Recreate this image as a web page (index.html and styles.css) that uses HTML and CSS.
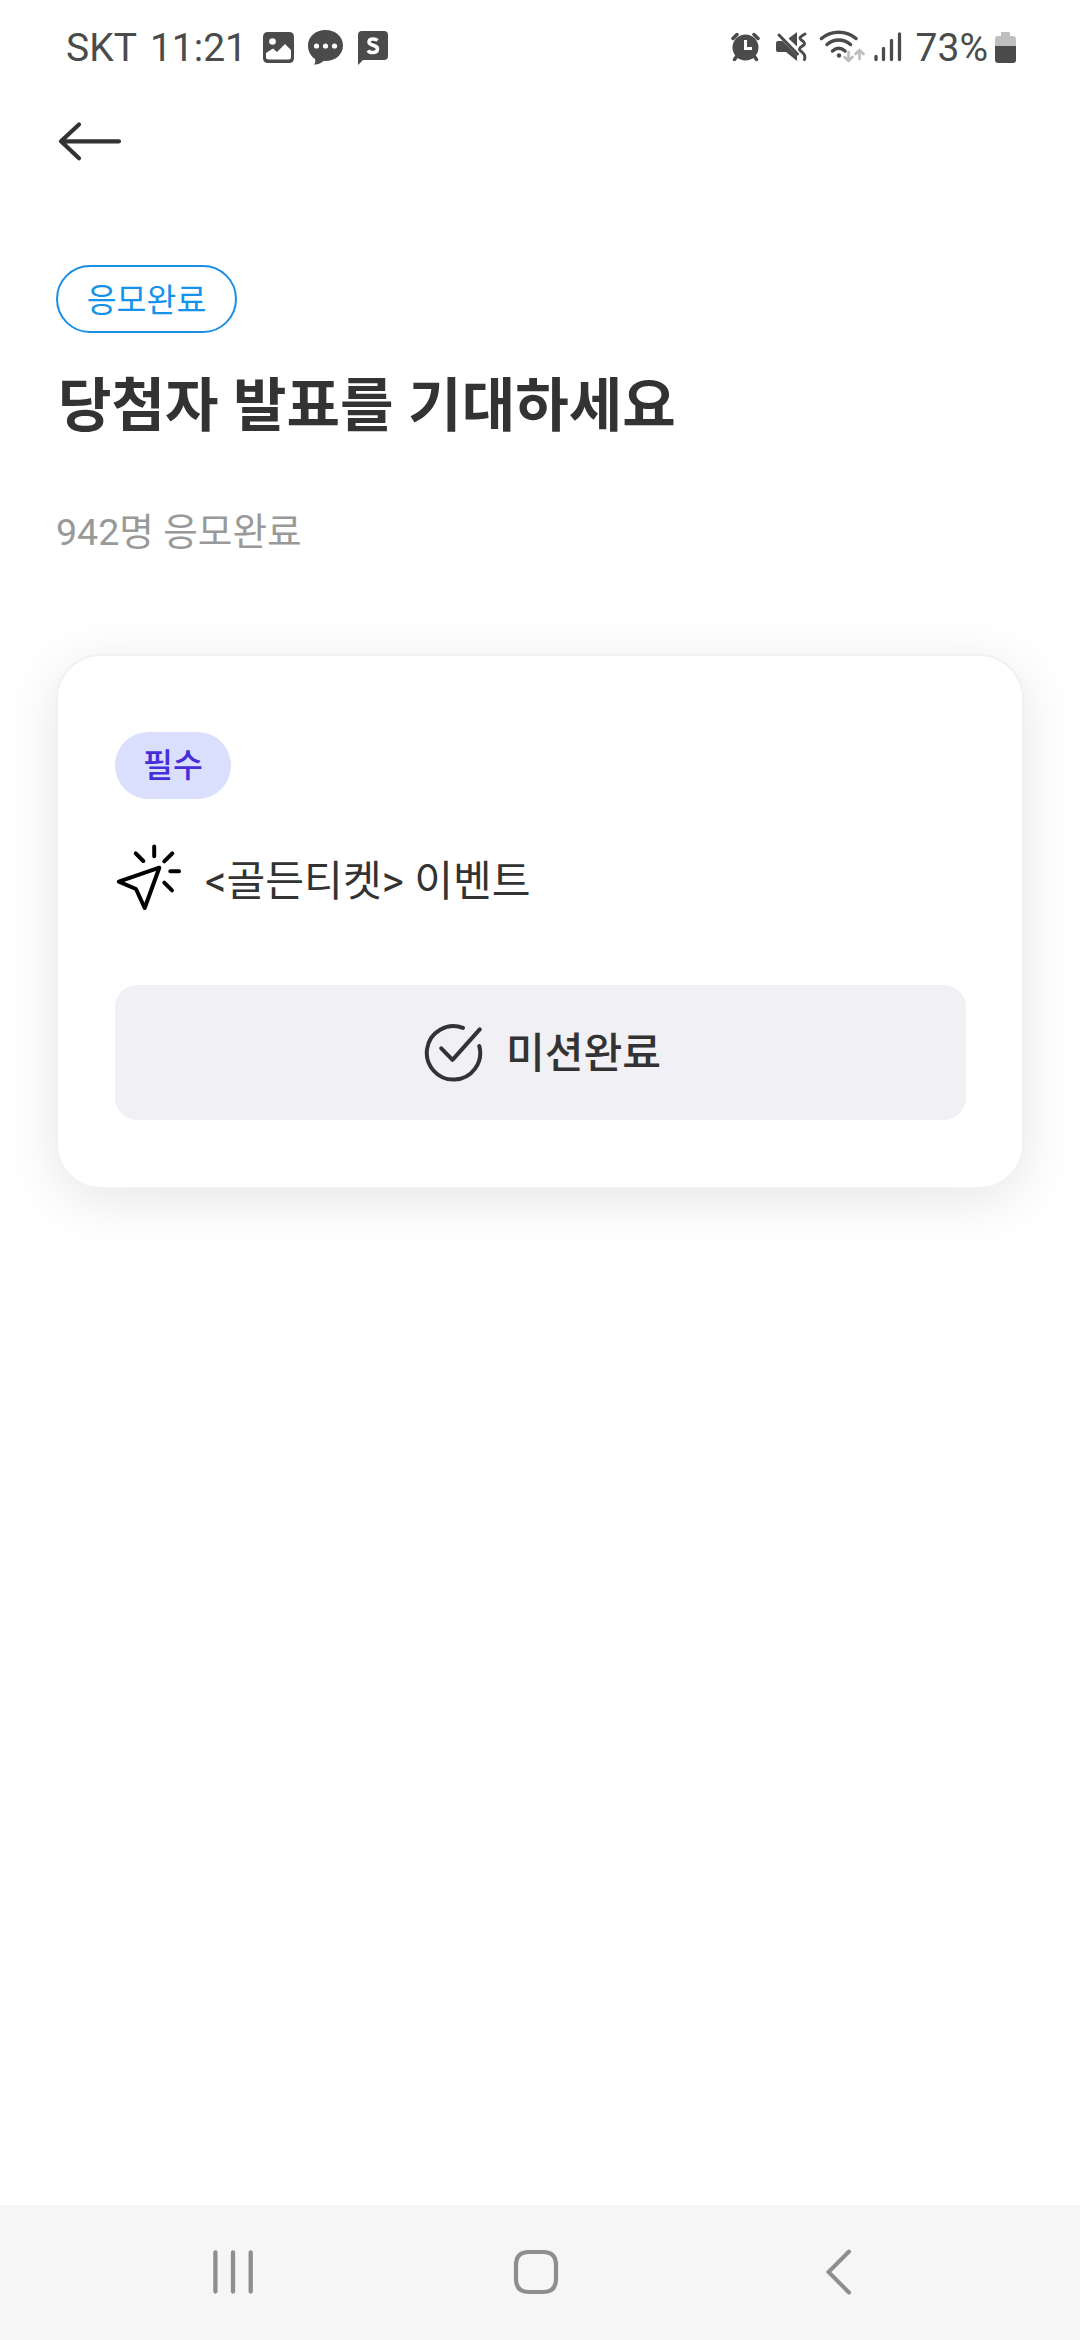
FILE: index.html
```html
<!DOCTYPE html>
<html lang="ko">
<head>
<meta charset="utf-8">
<title>응모완료</title>
<link rel="stylesheet" href="styles.css">
</head>
<body>
<div class="screen">
  <header class="status">
    <span class="carrier">SKT</span>
    <span class="clock">11:21</span>
    <svg class="notices" width="126" height="36" viewBox="263 31 126 36">
      <path fill="#4b4b4b" fill-rule="evenodd" d="M268 33h21q5 0 5 5v21q0 5-5 5h-21q-5 0-5-5V38q0-5 5-5zM266 54v4q0 2.500 2.500 2.500h20q2.500 0 2.500-2.500v-7l-6-6-8 8-4-3.500z"/>
      <circle cx="272.500" cy="42.500" r="3.300" fill="#fff"/>
      <path fill="#4b4b4b" d="M325.500 31c10 0 17.500 6.500 17.500 15.500S335.500 62 325.500 62h-2c-3 2.500-6 4-9.500 3.500 1.500-1.500 1.500-3.500 1-5.500-4.500-3-7-8-7-13.500C308 37.500 315.500 31 325.500 31z"/>
      <g fill="#fff"><circle cx="316.500" cy="47" r="2.600"/><circle cx="325.500" cy="47" r="2.600"/><circle cx="334.500" cy="47" r="2.600"/></g>
      <path fill="#4b4b4b" d="M362 32h22q4 0 4 4v21q0 4-4 4h-21l-5 5V36q0-4 4-4z"/>
      <path fill="none" stroke="#fff" stroke-width="3.500" d="M377.500 41.500c-2-2-8.500-2.500-8.500 1.500 0 4.500 8.500 2 8.500 7 0 4.500-7.500 4.500-9.500 1.500"/>
    </svg>
    <svg class="system" width="171" height="36" viewBox="732 31 171 36">
      <g stroke="#4b4b4b" stroke-width="3.500" stroke-linecap="round" fill="none">
        <path d="M734 39.500l4-4M755 35.500l4 4M738 57l-2.500 3.500M755 57l2.500 3.500"/>
      </g>
      <circle cx="746.500" cy="48.500" r="13" fill="#4b4b4b"/>
      <path d="M746.500 41v8.500h6.500" fill="none" stroke="#fff" stroke-width="3"/>
      <path fill="#4b4b4b" d="M779 42h4.500l14.500 14.500V62l-11-9h-8q-2 0-2-2v-7q0-2 2-2zM789.500 39.500l8.500-6.500v14.500z"/>
      <path d="M780 36l18.500 19M806 35c-6 3.200-6 4.300-3 6.500 3.500 2.300 3.500 3.500 0 5.800-3.500 2.300-3.500 3.500 0 5.800 3 2.200 3.500 4.200 2.500 7.500" fill="none" stroke="#4b4b4b" stroke-width="3" stroke-linecap="round"/>
      <g fill="none" stroke="#4b4b4b" stroke-width="3.500" stroke-linecap="round"><path d="M822.500 39.500c9.500-8.500 25-8.500 34.500 0M828 45.500c7-6 16.500-6 23.500 0M833.500 52c4-3.500 8.500-3.500 12.500 0"/></g>
      <circle cx="840" cy="56.500" r="2.200" fill="#4b4b4b"/>
      <path d="M849.500 53v9m-4-4l4 4 4-4M860.500 60v-9m-4 4l4-4 4 4" fill="none" stroke="#bdbdbd" stroke-width="2.600" stroke-linecap="round"/>
      <path d="M877 57.500v3M884.500 49.500v11M892.500 41.500v19M900.500 35v25.500" stroke="#4b4b4b" stroke-width="3.300" stroke-linecap="round"/>
    </svg>
    <span class="percent">73%</span>
    <svg class="battery" width="21" height="32" viewBox="0 0 21 32">
      <path fill="#bfbfbf" d="M7 0h7q1 0 1 1v3h3q3 0 3 3v8H0V7q0-3 3-3h3V1q0-1 1-1z"/>
      <path fill="#4b4b4b" d="M0 14h21v14q0 3-3 3H3q-3 0-3-3z"/>
    </svg>
  </header>

  <nav class="topbar">
    <svg width="64" height="42" viewBox="58 120 64 42" fill="none" stroke="#333" stroke-width="4.200" stroke-linecap="round" stroke-linejoin="round"><path d="M119 141.300H61M79 124.500L61 141.300l18 17"/></svg>
  </nav>

  <main class="content">
    <span class="badge badge-outline">응모완료</span>
    <h1 class="title">당첨자 발표를 기대하세요</h1>
    <p class="count">942명 응모완료</p>

    <section class="card">
      <span class="badge badge-required">필수</span>
      <div class="mission">
        <svg width="66" height="68" viewBox="116 843 66 68" fill="none" stroke="#000" stroke-width="4" stroke-linecap="round" stroke-linejoin="round"><path d="M118.800 881.700l40.500-14-14.600 40.300-8.700-19zM154.200 846.500v9.700M135.700 853.300l7.600 7.700M172.300 853.300l-8 8M170.300 871.300h8.700M164.300 882.700l7.700 7.600"/></svg>
        <span>&lt;골든티켓&gt; 이벤트</span>
      </div>
      <button class="done" type="button">
        <svg width="60" height="60" viewBox="425 1022 60 60" fill="none" stroke="#333" stroke-width="4" stroke-linecap="round" stroke-linejoin="round"><path d="M464 1026.900A26.700 26.700 0 1 0 480.300 1045M442.300 1047.300l11.200 11.500 27.200-30.500"/></svg>
        <span>미션완료</span>
      </button>
    </section>
  </main>

  <footer class="navbar">
    <svg width="40" height="48" viewBox="213 2248 40 48" stroke="#8e8e8e" stroke-width="4.300" stroke-linecap="round"><path d="M215.400 2252.500v39M233 2252.500v39M250.700 2252.500v39"/></svg>
    <svg class="home" width="46" height="48" viewBox="512 2248 46 48" fill="none" stroke="#8e8e8e" stroke-width="4.200"><path d="M528 2252h14q13 0 13 13v14q0 13-13 13h-14q-13 0-13-13v-14q0-13 13-13z"/></svg>
    <svg width="26" height="48" viewBox="826 2248 26 48" fill="none" stroke="#8e8e8e" stroke-width="4"><path stroke-linecap="round" d="M849 2251.500L828.500 2272l20.500 20.500"/></svg>
  </footer>
</div>
</body>
</html>
```
FILE: styles.css
```css
* { box-sizing: border-box; }
body {
  margin: 0;
  background: #fff;
  color: #333;
  font-family: Roboto, "Noto Sans CJK KR", sans-serif;
}
.screen {
  width: 1080px;
  height: 2340px;
  display: flex;
  flex-direction: column;
  overflow: hidden;
}
.status {
  height: 96px;
  padding: 0 64px 0 66px;
  display: flex;
  align-items: center;
  color: #4b4b4b;
  font-size: 39px;
  line-height: 48px;
  white-space: nowrap;
}
.clock { margin-left: 13px; }
.notices { margin-left: 16px; }
.system { margin-left: auto; margin-right: 14px; }
.battery { margin-left: 7px; }
.topbar {
  height: 169px;
  padding: 24px 58px 0;
}
.topbar svg, .navbar svg { display: block; }
.content {
  flex: 1;
  padding: 0 56px;
  display: flex;
  flex-direction: column;
  align-items: flex-start;
}
.badge {
  display: flex;
  align-items: center;
  justify-content: center;
  height: 68px;
  border-radius: 34px;
  font-size: 32.500px;
  line-height: 40px;
}
.badge-outline {
  width: 181px;
  padding-top: 3px;
  border: 2px solid #1a8fe3;
  color: #1593ec;
}
.title {
  margin: 33px 0 0 2px;
  font-size: 58.200px;
  line-height: 80px;
  font-weight: 700;
  white-space: nowrap;
}
.count {
  margin: 58px 0 0;
  font-size: 37.600px;
  line-height: 56px;
  color: #999;
}
.card {
  width: 968px;
  height: 535px;
  margin-top: 94px;
  padding: 76px 57px 0;
  border: 2px solid #f1f1f6;
  border-radius: 45px;
  background: #fff;
  box-shadow: 0 11px 56px rgba(0, 0, 0, 0.1);
}
.badge-required {
  width: 116px;
  height: 67px;
  background: #d9dffc;
  color: #472fd8;
  font-weight: 500;
}
.mission {
  display: flex;
  align-items: center;
  gap: 23px;
  margin-top: 44px;
  height: 68px;
  font-size: 42.200px;
  line-height: 60px;
}
.mission svg { margin-left: 1px; }
.mission span { padding-top: 9px; }
.done {
  display: flex;
  align-items: center;
  justify-content: center;
  gap: 22px;
  width: 851px;
  height: 135px;
  margin-top: 74px;
  padding: 0 0 0 4px;
  border: 0;
  border-radius: 22px;
  background: #f1f0f5;
  color: #333;
  font: 500 42.200px/60px Roboto, "Noto Sans CJK KR", sans-serif;
}
.done span { padding-top: 3px; }
.navbar {
  height: 135px;
  padding: 0 228px 2px 213px;
  display: flex;
  align-items: center;
  justify-content: space-between;
  background: #f6f6f6;
}
.home { margin-right: 7px; }
```
